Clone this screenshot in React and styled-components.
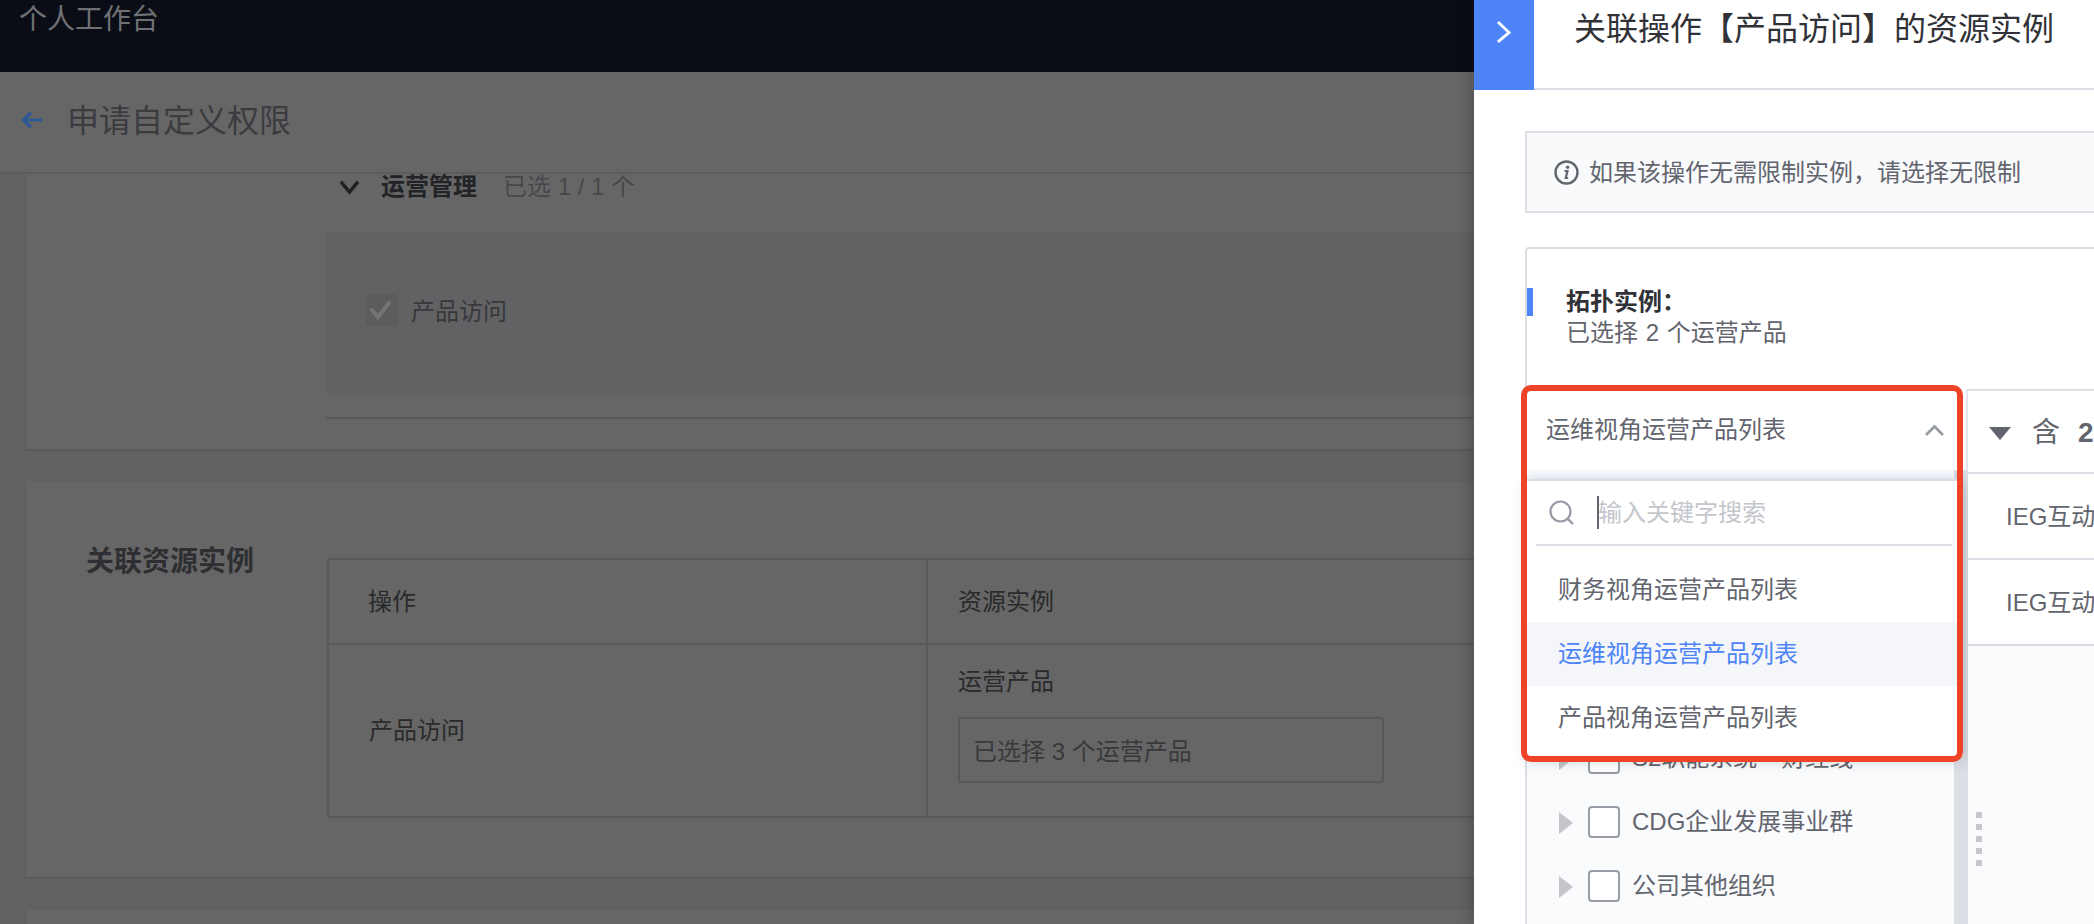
import React from "react";
import styled, { createGlobalStyle } from "styled-components";

const Global = createGlobalStyle`
  html, body { margin: 0; padding: 0; background: #626264; }
  * { box-sizing: border-box; }
  body { font-family: "Liberation Sans", "Noto Sans CJK SC", sans-serif; }
`;

const Page = styled.div`
  position: relative;
  width: 2094px;
  height: 924px;
  overflow: hidden;
  display: flex;
  flex-direction: column;
  background: #626264;
`;

const TopBar = styled.header`
  height: 72px;
  flex: none;
  background: #0a0d16;
  color: #6f7175;
  font-size: 28px;
  line-height: 40px;
  padding-left: 19px;
`;

const PageHeader = styled.div`
  height: 102px;
  flex: none;
  background: #666666;
  border-bottom: 2px solid #5b5b62;
  display: flex;
  align-items: center;
  padding-left: 21px;
  gap: 24px;
  color: #3b3c40;
  font-size: 32px;
  padding-bottom: 4px;
`;

const PageTitle = styled.span`
  margin-bottom: 4px;
`;

const Content = styled.main`
  flex: 1;
  min-height: 0;
  overflow: hidden;
  display: flex;
  flex-direction: column;
  gap: 32px;
  padding-left: 26px;
`;

const Card = styled.section`
  flex: none;
  width: 2042px;
  height: ${(p) => p.$h}px;
  background: #666666;
  box-shadow: 0 1px 3px rgba(0, 0, 0, 0.12);
`;

const PermissionCard = styled(Card)`
  padding-left: 300px;
`;

const GroupHead = styled.div`
  display: flex;
  align-items: center;
  height: 26px;
  padding-left: 14px;
  font-size: 24px;
  line-height: 26px;
`;

const GroupName = styled.span`
  margin-left: 22px;
  font-weight: 700;
  color: #222326;
`;

const GroupCount = styled.span`
  margin-left: 26px;
  color: #47484c;
`;

const GroupBody = styled.div`
  margin-top: 33px;
  height: 164px;
  background: #626264;
  border-radius: 4px;
  display: flex;
  align-items: center;
  gap: 13px;
  padding: 0 0 10px 40px;
  color: #37383b;
  font-size: 24px;
`;

const DimCheck = styled.span`
  width: 32px;
  height: 32px;
  border-radius: 4px;
  background: #5c5c5e;
  display: flex;
  align-items: center;
  justify-content: center;
`;

const CheckLabel = styled.span`
  margin-bottom: 2px;
`;

const Divider = styled.div`
  margin-top: 20px;
  height: 2px;
  background: #58585a;
`;

const ResourceCard = styled(Card)`
  display: flex;
  padding: 67px 0 0 60px;
`;

const ResourceLabel = styled.div`
  width: 241px;
  flex: none;
  font-size: 28px;
  line-height: 28px;
  font-weight: 700;
  color: #2e2f32;
`;

const ResourceTable = styled.div`
  margin-top: 10px;
  width: 1700px;
  height: 260px;
  border: 2px solid #5a5a5c;
  border-radius: 2px;
  display: grid;
  grid-template-columns: 599px 1fr;
  grid-template-rows: 85px 1fr;
  font-size: 24px;
  color: #2a2a2c;
`;

const Cell = styled.div`
  display: flex;
  flex-direction: column;
  justify-content: center;
  padding-left: ${(p) => p.$pad}px;
  padding-bottom: 4px;
  border-bottom: ${(p) => (p.$head ? "2px solid #5a5a5c" : "none")};
  border-right: ${(p) => (p.$first ? "2px solid #5a5a5c" : "none")};
`;

const ResourceCell = styled(Cell)`
  justify-content: flex-start;
  padding-top: 21px;
`;

const ResourceName = styled.div`
  line-height: 32px;
`;

const SelectedBox = styled.div`
  flex: none;
  margin-top: 19px;
  width: 426px;
  height: 66px;
  border: 2px solid #58585a;
  border-radius: 3px;
  display: flex;
  align-items: center;
  padding: 0 0 2px 13px;
  color: #38393c;
`;

const Panel = styled.aside`
  position: absolute;
  top: 0;
  right: 0;
  width: 620px;
  height: 924px;
  overflow: hidden;
  background: #fff;
  box-shadow: -4px 0 14px rgba(0, 0, 0, 0.2);
`;

const PanelHeader = styled.div`
  height: 90px;
  display: flex;
  border-bottom: 2px solid #dcdee5;
`;

const Toggle = styled.div`
  width: 60px;
  height: 90px;
  flex: none;
  background: #4d84f7;
  display: flex;
  justify-content: center;
  padding-top: 21px;
`;

const PanelTitle = styled.h2`
  margin: 0;
  padding-left: 40px;
  font-size: 32px;
  line-height: 58px;
  font-weight: 400;
  color: #313238;
  white-space: nowrap;
`;

const PanelBody = styled.div`
  padding: 41px 0 0 51px;
`;

const Notice = styled.div`
  width: 700px;
  height: 82px;
  background: #f9fafc;
  border: 2px solid #dcdee5;
  display: flex;
  align-items: center;
  gap: 10px;
  padding: 0 0 0 27px;
  font-size: 24px;
  color: #63656e;
`;

const NoticeText = styled.span`
  margin-bottom: 4px;
`;

const TopoCard = styled.div`
  margin-top: 34px;
  width: 700px;
  height: 677px;
  border: 2px solid #dcdee5;
  border-radius: 4px 0 0 0;
`;

const Intro = styled.div`
  position: relative;
  height: 140px;
  padding: 37px 0 0 39px;
  font-size: 24px;
  line-height: 31px;
  word-spacing: 1px;
  color: #63656e;
  &::before {
    content: "";
    position: absolute;
    left: 0;
    top: 39px;
    width: 6px;
    height: 28px;
    background: #4d84f7;
  }
`;

const IntroTitle = styled.div`
  font-weight: 700;
  color: #313238;
`;

const Split = styled.div`
  display: flex;
  height: 535px;
`;

const TreePane = styled.div`
  position: relative;
  width: 441px;
  flex: none;
  display: flex;
  flex-direction: column;
`;

const Trigger = styled.div`
  flex: none;
  height: 81px;
  display: flex;
  align-items: center;
  justify-content: space-between;
  padding: 0 22px 0 19px;
  background: #fff;
  font-size: 24px;
  color: #63656e;
  border-right: 2px solid #e4e7f2;
`;

const TriggerText = styled.span`
  margin-bottom: 4px;
`;

const TreeList = styled.div`
  flex: 1;
  padding-top: 256px;
  background: #fafbfd;
  border-right: 14px solid #dcdee5;
`;

const TreeRow = styled.div`
  height: 64px;
  display: flex;
  align-items: center;
  padding-left: 32px;
  font-size: 24px;
  color: #63656e;
`;

const Caret = styled.span`
  width: 0;
  height: 0;
  flex: none;
  margin-top: 2px;
  border-style: solid;
  border-width: 11px 0 11px 14px;
  border-color: transparent transparent transparent #c4c6cc;
`;

const Box = styled.span`
  width: 32px;
  height: 32px;
  flex: none;
  margin-left: 15px;
  margin-right: 12px;
  border: 2px solid #979ba5;
  border-radius: 4px;
  background: #fff;
`;

const RowText = styled.span`
  white-space: nowrap;
  margin-bottom: 6px;
`;

const Popup = styled.div`
  position: absolute;
  top: 90px;
  left: 0;
  width: 436px;
  height: 277px;
  background: #fff;
  border-top: 2px solid #dcdee5;
  box-shadow: 0 -4px 8px rgba(58, 100, 255, 0.05), 0 4px 14px rgba(0, 0, 0, 0.2);
`;

const SearchRow = styled.div`
  height: 65px;
  margin: 0 11px 0 9px;
  border-bottom: 2px solid #dcdee5;
  display: flex;
  align-items: center;
  padding-left: 13px;
  font-size: 24px;
  color: #c4c6cc;
`;

const TextCaret = styled.span`
  width: 2px;
  height: 33px;
  margin: 0 -1px 0 22px;
  background: #63656e;
`;

const Placeholder = styled.span`
  margin-bottom: 4px;
`;

const OptionList = styled.div`
  padding-top: 12px;
`;

const Option = styled.div`
  height: 64px;
  display: flex;
  align-items: center;
  padding: 0 0 6px 31px;
  font-size: 24px;
  color: ${(p) => (p.$active ? "#4d84f7" : "#63656e")};
  background: ${(p) => (p.$active ? "#f5f6fa" : "#fff")};
`;

const DetailPane = styled.div`
  position: relative;
  flex: 1;
  background: #fafbfd;
  border-top: 2px solid #dcdee5;
  font-size: 24px;
  color: #63656e;
`;

const DetailHead = styled.div`
  height: 83px;
  background: #fff;
  border-bottom: 2px solid #dcdee5;
  display: flex;
  align-items: center;
  padding-left: 21px;
  gap: 21px;
  font-size: 28px;
  white-space: nowrap;
`;

const DetailCount = styled.span`
  margin-bottom: 4px;
`;

const TriangleDown = styled.span`
  width: 0;
  height: 0;
  flex: none;
  margin-top: 4px;
  border-style: solid;
  border-width: 13px 11px 0 11px;
  border-color: #63656e transparent transparent transparent;
`;

const Count = styled.b`
  margin-left: 18px;
`;

const DetailRow = styled.div`
  height: 86px;
  background: #fff;
  border-bottom: 2px solid #dcdee5;
  display: flex;
  align-items: center;
  padding: 0 0 4px 38px;
  white-space: nowrap;
`;

const Handle = styled.div`
  position: absolute;
  left: 8px;
  top: 421px;
  display: flex;
  flex-direction: column;
  gap: 6px;
`;

const HandleDot = styled.span`
  width: 6px;
  height: 6px;
  background: #c4c6cc;
`;

const Annotation = styled.div`
  position: absolute;
  left: 47px;
  top: 385px;
  width: 442px;
  height: 377px;
  border: 6px solid #ee4326;
  border-radius: 10px;
  pointer-events: none;
`;

const Chevron = ({ d, w, h, color, sw = 3 }) => (
  <svg width={w} height={h} viewBox={`0 0 ${w} ${h}`} fill="none" style={{ flex: "none" }}>
    <path d={d} stroke={color} strokeWidth={sw} strokeLinecap="square" strokeLinejoin="miter" />
  </svg>
);

const TREE = ["S2职能系统一财经线", "CDG企业发展事业群", "公司其他组织"];
const OPTIONS = ["财务视角运营产品列表", "运维视角运营产品列表", "产品视角运营产品列表"];

export default function App() {
  return (
    <Page>
      <Global />
      <TopBar>个人工作台</TopBar>
      <PageHeader>
        <svg width="22" height="18" viewBox="0 0 22 18" fill="none" style={{ flex: "none" }}>
          <path d="M21 9H3M10 1.5 2.5 9l7.5 7.5" stroke="#2f5695" strokeWidth="3.2" />
        </svg>
        <PageTitle>申请自定义权限</PageTitle>
      </PageHeader>
      <Content>
        <PermissionCard $h={275}>
          <GroupHead>
            <Chevron d="M2 3l7.5 9L17 3" w={19} h={15} color="#1f2023" sw={3.4} />
            <GroupName>运营管理</GroupName>
            <GroupCount>已选 1 / 1 个</GroupCount>
          </GroupHead>
          <GroupBody>
            <DimCheck>
              <Chevron d="M6 16l6 7L23 9" w={32} h={32} color="#747476" sw={4} />
            </DimCheck>
            <CheckLabel>产品访问</CheckLabel>
          </GroupBody>
          <Divider />
        </PermissionCard>
        <ResourceCard $h={396}>
          <ResourceLabel>关联资源实例</ResourceLabel>
          <ResourceTable>
            <Cell $head $first $pad={39}>操作</Cell>
            <Cell $head $pad={30}>资源实例</Cell>
            <Cell $first $pad={40}>产品访问</Cell>
            <ResourceCell $pad={30}>
              <ResourceName>运营产品</ResourceName>
              <SelectedBox>已选择 3 个运营产品</SelectedBox>
            </ResourceCell>
          </ResourceTable>
        </ResourceCard>
        <Card $h={200} />
      </Content>
      <Panel>
        <PanelHeader>
          <Toggle>
            <Chevron d="M2 2l10 9.5L2 20" w={14} h={22} color="#fff" sw={2.8} />
          </Toggle>
          <PanelTitle>关联操作【产品访问】的资源实例</PanelTitle>
        </PanelHeader>
        <PanelBody>
          <Notice>
            <svg width="25" height="25" viewBox="0 0 25 25" fill="none" style={{ flex: "none" }}>
              <circle cx="12.5" cy="12.5" r="11" stroke="#63656e" strokeWidth="2.4" />
              <circle cx="13.6" cy="7.2" r="1.7" fill="#63656e" />
              <path d="M10.5 11h3l-1.8 7h2.4" stroke="#63656e" strokeWidth="2.2" />
            </svg>
            <NoticeText>如果该操作无需限制实例，请选择无限制</NoticeText>
          </Notice>
          <TopoCard>
            <Intro>
              <IntroTitle>拓扑实例：</IntroTitle>
              已选择 2 个运营产品
            </Intro>
            <Split>
              <TreePane>
                <Trigger>
                  <TriggerText>运维视角运营产品列表</TriggerText>
                  <Chevron d="M2 10l7.5-7.5L17 10" w={19} h={12} color="#979ba5" sw={2.8} />
                </Trigger>
                <TreeList>
                  {TREE.map((t) => (
                    <TreeRow key={t}>
                      <Caret />
                      <Box />
                      <RowText>{t}</RowText>
                    </TreeRow>
                  ))}
                </TreeList>
                <Popup>
                  <SearchRow>
                    <svg width="26" height="26" viewBox="0 0 26 26" fill="none" style={{ flex: "none" }}>
                      <circle cx="11.5" cy="11.5" r="10" stroke="#979ba5" strokeWidth="2.2" />
                      <path d="M18.8 18.8 24 24" stroke="#979ba5" strokeWidth="2.4" />
                    </svg>
                    <TextCaret />
                    <Placeholder>输入关键字搜索</Placeholder>
                  </SearchRow>
                  <OptionList>
                    {OPTIONS.map((o, i) => (
                      <Option key={o} $active={i === 1}>{o}</Option>
                    ))}
                  </OptionList>
                </Popup>
              </TreePane>
              <DetailPane>
                <DetailHead>
                  <TriangleDown />
                  <DetailCount>含<Count>2</Count> 个</DetailCount>
                </DetailHead>
                <DetailRow>IEG互动娱乐事业群</DetailRow>
                <DetailRow>IEG互动娱乐事业群</DetailRow>
                <Handle>
                  {[0, 1, 2, 3, 4].map((i) => (
                    <HandleDot key={i} />
                  ))}
                </Handle>
              </DetailPane>
            </Split>
          </TopoCard>
        </PanelBody>
        <Annotation />
      </Panel>
    </Page>
  );
}
